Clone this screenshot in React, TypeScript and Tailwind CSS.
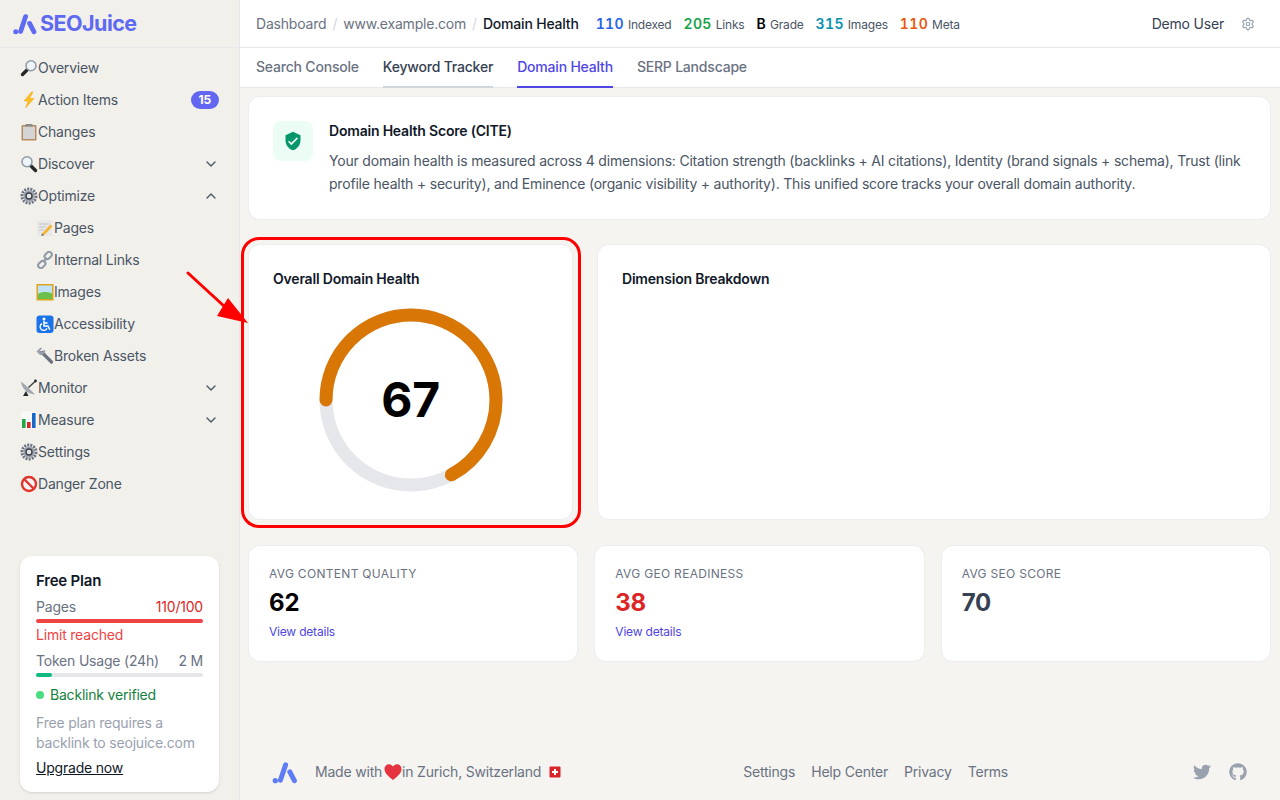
import React from 'react';
import { ChevronDown, ChevronUp, Settings } from 'lucide-react';
import { FaTwitter, FaGithub } from 'react-icons/fa';
import { MdVerifiedUser } from 'react-icons/md';

const font = { fontFamily: 'Inter, "Noto Sans", sans-serif' };

function LogoMark({ className }: { className?: string }) {
  return (
    <svg viewBox="0 0 24 22" className={className} fill="none" stroke="currentColor" strokeLinecap="round">
      <circle cx="2.7" cy="18.8" r="2.5" fill="currentColor" stroke="none" />
      <path d="M7.6 18.4 12.6 3.6" strokeWidth="4.8" />
      <path d="M16.6 10.4 21 18.8" strokeWidth="4.8" />
    </svg>
  );
}

/* small drawings standing in for the emoji of the sidebar */
function Glass({ flip }: { flip?: boolean }) {
  return (
    <svg viewBox="0 0 18 18" className={`h-[18px] w-[18px] ${flip ? '-scale-x-100' : ''}`}>
      <path d="M7.5 10.5 2.5 15.5" stroke="#27272a" strokeWidth="3.4" strokeLinecap="round" />
      <circle cx="11" cy="6.8" r="5" fill="#eef4f8" stroke="#8d99a6" strokeWidth="1.5" />
    </svg>
  );
}
function Zap() {
  return (
    <svg viewBox="0 0 18 18" className="h-[18px] w-[18px]">
      <path d="M11.5 1 4 10h4.2L5.5 17 14 7.5H9.6L13 1z" fill="#fbbf24" stroke="#f59e0b" strokeWidth=".5" />
    </svg>
  );
}
function Clipboard() {
  return (
    <svg viewBox="0 0 18 18" className="h-[18px] w-[18px]">
      <rect x="1.5" y="2" width="15" height="15.5" rx="1" fill="#b58b5f" />
      <rect x="3" y="3.5" width="12" height="12.5" fill="#d4d4d4" />
      <rect x="5.5" y="1" width="7" height="2.5" rx=".6" fill="#8a8a8a" />
    </svg>
  );
}
function Gear() {
  return (
    <svg viewBox="0 0 18 18" className="h-[18px] w-[18px]">
      <circle cx="9" cy="9" r="7" fill="none" stroke="#6b7280" strokeWidth="3" strokeDasharray="2 1.1" />
      <circle cx="9" cy="9" r="5.6" fill="#9ca3af" />
      <circle cx="9" cy="9" r="3" fill="#e5e7eb" stroke="#3f3f46" strokeWidth="1.4" />
    </svg>
  );
}
function Memo() {
  return (
    <svg viewBox="0 0 18 18" className="h-[18px] w-[18px]">
      <rect x="1" y="1.5" width="15" height="15.5" fill="#e8e8e8" />
      <path d="M3 5h10M3 8h7M3 11h5" stroke="#c4c4c4" strokeWidth="1" />
      <path d="M6 14.5 14.5 5.5l2 2L8 16.2z" fill="#f5b32e" />
      <path d="M6 14.5 5.3 16.8 8 16.2z" fill="#52525b" />
    </svg>
  );
}
function LinkIcon() {
  return (
    <svg viewBox="0 0 18 18" className="h-[18px] w-[18px]" fill="none" stroke="#8f9aa6" strokeWidth="2">
      <rect x="8.2" y="1.8" width="8" height="5.4" rx="2.7" transform="rotate(-45 12.2 4.5)" />
      <rect x="1.8" y="10.8" width="8" height="5.4" rx="2.7" transform="rotate(-45 5.8 13.5)" />
      <path d="M7 11 11 7" />
    </svg>
  );
}
function Picture() {
  return (
    <svg viewBox="0 0 18 18" className="h-[18px] w-[18px]">
      <rect x=".5" y="1" width="17" height="16.5" fill="#d9a520" />
      <rect x="2" y="2.5" width="14" height="13.5" fill="#bfe3f5" />
      <path d="M2 11c4-2.5 9-2.5 14-.5V16H2z" fill="#6cc04a" />
    </svg>
  );
}
function Wheelchair() {
  return (
    <svg viewBox="0 0 18 18" className="h-[18px] w-[18px]">
      <rect x=".5" y=".5" width="17" height="17.5" rx="3" fill="#1a73e8" />
      <circle cx="8" cy="4" r="1.5" fill="#fff" />
      <path d="M8 6v5h4l1.8 3.6M8 8h3.6" fill="none" stroke="#fff" strokeWidth="1.5" />
      <path d="M6 8.6a3.6 3.6 0 1 0 5 4.6" fill="none" stroke="#fff" strokeWidth="1.3" />
    </svg>
  );
}
function Wrench() {
  return (
    <svg viewBox="0 0 18 18" className="h-[18px] w-[18px]">
      <path d="M6 5.5 15.5 15" stroke="#6b7280" strokeWidth="3.2" strokeLinecap="round" />
      <path d="M1 4.5 4.5 1l1 .2L3.7 3.4l1 1.9 2-.3L8.5 3 8.6 5.5 6.8 7.6 4 7.4z" fill="#9ca3af" stroke="#8b929b" strokeWidth=".8" />
    </svg>
  );
}
function Satellite() {
  return (
    <svg viewBox="0 0 18 18" className="h-[18px] w-[18px]">
      <path d="M1 2.5C1.5 9 7 15 15 15.5 12 12 5 5.5 1 2.5z" fill="#a1a8b0" />
      <path d="M6 12 3 17h5.5" fill="#27272a" />
      <path d="M8.5 8.5 15 2.5" stroke="#3f3f46" strokeWidth="1.4" />
      <circle cx="15.5" cy="2" r="1.4" fill="#27272a" />
    </svg>
  );
}
function BarChart() {
  return (
    <svg viewBox="0 0 18 18" className="h-[18px] w-[18px]">
      <rect x=".5" y=".5" width="17" height="17" fill="#f8f8f8" />
      <rect x="2" y="8" width="3.6" height="9" fill="#22a745" />
      <rect x="7" y="11" width="3.6" height="6" fill="#d3272b" />
      <rect x="12" y="2" width="3.6" height="15" fill="#1a66c9" />
    </svg>
  );
}
function NoEntry() {
  return (
    <svg viewBox="0 0 18 18" className="h-[18px] w-[18px]">
      <circle cx="9" cy="9" r="7" fill="#f4f4f5" stroke="#e0362c" strokeWidth="2.4" />
      <path d="M4 4 14 14" stroke="#e0362c" strokeWidth="2.4" />
    </svg>
  );
}

function NavRow({ icon, label, sub, open, badge }: { icon: React.ReactNode; label: string; sub?: boolean; open?: boolean; badge?: string }) {
  return (
    <div className={`flex h-8 items-center pr-5 text-sm text-gray-600 ${sub ? 'pl-9' : 'pl-5'}`}>
      {icon}
      <span className="flex-1">{label}</span>
      {badge && (
        <span className="rounded-full bg-[#6366f1] px-2 text-xs leading-[18px] font-bold text-white">{badge}</span>
      )}
      {open === false && <ChevronDown size={16} className="text-gray-600" />}
      {open === true && <ChevronUp size={16} className="text-gray-600" />}
    </div>
  );
}

function Sidebar() {
  return (
    <aside className="flex h-full w-[240px] shrink-0 flex-col border-r border-gray-200 bg-[#f2f0eb]">
      <div className="flex h-[48px] shrink-0 items-center gap-[3px] border-b border-gray-200 pl-[13px] text-[#5f6af2]">
        <LogoMark className="h-[22px] w-6" />
        <span className="text-[21.5px] font-bold tracking-tight">SEOJuice</span>
      </div>
      <nav className="pt-1">
        <NavRow icon={<Glass />} label="Overview" />
        <NavRow icon={<Zap />} label="Action Items" badge="15" />
        <NavRow icon={<Clipboard />} label="Changes" />
        <NavRow icon={<Glass flip />} label="Discover" open={false} />
        <NavRow icon={<Gear />} label="Optimize" open />
        <NavRow sub icon={<Memo />} label="Pages" />
        <NavRow sub icon={<LinkIcon />} label="Internal Links" />
        <NavRow sub icon={<Picture />} label="Images" />
        <NavRow sub icon={<Wheelchair />} label="Accessibility" />
        <NavRow sub icon={<Wrench />} label="Broken Assets" />
        <NavRow icon={<Satellite />} label="Monitor" open={false} />
        <NavRow icon={<BarChart />} label="Measure" open={false} />
        <NavRow icon={<Gear />} label="Settings" />
        <NavRow icon={<NoEntry />} label="Danger Zone" />
      </nav>
      <div className="mx-5 mt-auto mb-2 rounded-xl bg-white px-4 pt-[15px] pb-[14px] text-sm shadow-sm">
        <div className="text-[15px] leading-5 font-semibold text-gray-900">Free Plan</div>
        <div className="mt-[6px] flex justify-between leading-5 text-gray-500">
          <span>Pages</span>
          <span className="text-[#dc2626]">110/100</span>
        </div>
        <div className="mt-[2px] h-1 rounded-full bg-[#ef4444]" />
        <div className="mt-[2px] leading-5 text-[#ef4444]">Limit reached</div>
        <div className="mt-[6px] flex justify-between leading-5 text-gray-500">
          <span>Token Usage (24h)</span>
          <span>2 M</span>
        </div>
        <div className="mt-[2px] h-1 rounded-full bg-gray-200">
          <div className="h-1 w-4 rounded-full bg-[#10b981]" />
        </div>
        <div className="mt-2 flex items-center gap-[6px] leading-5 text-[#15803d]">
          <span className="h-2 w-2 rounded-full bg-[#4ade80]" />
          Backlink verified
        </div>
        <div className="mt-2 leading-5 text-gray-400">
          Free plan requires a backlink to seojuice.com
        </div>
        <div className="mt-[5px] leading-5 text-gray-900 underline">Upgrade now</div>
      </div>
    </aside>
  );
}

function HeaderStat({ value, label, color }: { value: string; label: string; color: string }) {
  return (
    <span className="flex items-baseline gap-1">
      <span className={`text-sm font-semibold tracking-[0.35px] tabular-nums ${color}`}>{value}</span>
      <span className="text-xs text-gray-600">{label}</span>
    </span>
  );
}

function TopBar() {
  return (
    <header className="flex h-[48px] shrink-0 items-center border-b border-gray-200 bg-white pr-[25px] pl-4 text-sm">
      <span className="text-gray-500">Dashboard</span>
      <span className="mx-[6px] text-gray-300">/</span>
      <span className="text-gray-500">www.example.com</span>
      <span className="mx-[6px] text-gray-300">/</span>
      <span className="font-medium text-gray-900">Domain Health</span>
      <div className="ml-[17px] flex items-center gap-3">
        <HeaderStat value="110" label="Indexed" color="text-[#2563eb]" />
        <HeaderStat value="205" label="Links" color="text-[#16a34a]" />
        <HeaderStat value="B" label="Grade" color="text-black" />
        <HeaderStat value="315" label="Images" color="text-[#0891b2]" />
        <HeaderStat value="110" label="Meta" color="text-[#ea580c]" />
      </div>
      <span className="ml-auto text-gray-700">Demo User</span>
      <Settings size={14} className="ml-[17px] text-gray-400" />
    </header>
  );
}

function Tabs() {
  return (
    <div className="flex h-10 shrink-0 gap-6 border-b border-gray-200 bg-white px-4 text-sm font-medium">
      <span className="-mb-px flex items-center border-b-2 border-transparent pb-px text-gray-500">Search Console</span>
      <span className="-mb-px flex items-center border-b-2 border-gray-300 pb-px text-gray-700">Keyword Tracker</span>
      <span className="-mb-px flex items-center border-b-2 border-[#4f46e5] pb-px text-[#4f46e5]">Domain Health</span>
      <span className="-mb-px flex items-center border-b-2 border-transparent pb-px text-gray-500">SERP Landscape</span>
    </div>
  );
}

function Gauge() {
  const r = 85;
  const c = 2 * Math.PI * r;
  return (
    <div className="relative mx-auto h-[192px] w-[192px]">
      <svg viewBox="0 0 192 192" className="h-full w-full rotate-180">
        <circle cx="96" cy="96" r={r} fill="none" stroke="#e5e7eb" strokeWidth="13" />
        <circle cx="96" cy="96" r={r} fill="none" stroke="#d97706" strokeWidth="13" strokeLinecap="round" strokeDasharray={`${c * 0.67} ${c}`} />
      </svg>
      <div className="absolute inset-0 flex items-center justify-center text-5xl font-bold text-black">67</div>
    </div>
  );
}

function StatCard({ label, value, color, link }: { label: string; value: string; color: string; link?: boolean }) {
  return (
    <div className="rounded-xl border border-gray-200/70 bg-white p-5 pb-[21px]">
      <div className="text-xs leading-4 tracking-wide text-gray-500 uppercase">{label}</div>
      <div className={`mt-[5px] text-2xl leading-8 font-bold ${color}`}>{value}</div>
      {link && <div className="mt-[5px] text-xs leading-4 text-[#4f46e5]">View details</div>}
    </div>
  );
}

function Footer() {
  return (
    <footer className="mt-auto flex h-[56px] items-center pr-6 pl-6 text-sm text-gray-500">
      <LogoMark className="h-[23px] w-[26px] text-[#5f7cf7]" />
      <span className="ml-[17px]">Made with</span>
      <svg viewBox="0 0 18 18" className="ml-[2px] h-[18px] w-[18px]">
        <path d="M9 17C4 13 .5 10 .5 6 .5 3 2.8 1.2 5 1.2 6.8 1.2 8.2 2.2 9 3.6 9.8 2.2 11.2 1.2 13 1.2 15.2 1.2 17.5 3 17.5 6 17.5 10 14 13 9 17z" fill="#e5333f" />
      </svg>
      <span>in Zurich, Switzerland</span>
      <svg viewBox="0 0 12 12" className="ml-2 h-3 w-3">
        <rect x="0.5" y="0.5" width="11" height="11" rx="1" fill="#d8232a" />
        <path d="M6 3v6M3 6h6" stroke="#fff" strokeWidth="2" />
      </svg>
      <div className="ml-[182px] flex gap-4">
        <span>Settings</span>
        <span>Help Center</span>
        <span>Privacy</span>
        <span>Terms</span>
      </div>
      <div className="ml-auto flex items-center gap-[18px] text-gray-400">
        <FaTwitter size={18} />
        <FaGithub size={18} />
      </div>
    </footer>
  );
}

export default function App() {
  return (
    <div className="relative flex h-screen w-full overflow-hidden tracking-[-0.2px]" style={font}>
      <Sidebar />
      <div className="flex min-w-0 flex-1 flex-col bg-[#f5f4f1]">
        <TopBar />
        <Tabs />
        <main className="flex flex-1 flex-col pt-2 pr-[9px] pl-2">
          <div className="flex gap-4 rounded-xl border border-gray-200/70 bg-white p-6">
            <div className="flex h-10 w-10 shrink-0 items-center justify-center rounded-lg bg-[#ecfdf5]">
              <MdVerifiedUser size={20} className="text-[#059669]" />
            </div>
            <div>
              <h3 className="text-sm font-semibold text-gray-900">Domain Health Score (CITE)</h3>
              <p className="mt-2 text-sm leading-[23px] text-gray-600">
                Your domain health is measured across 4 dimensions: Citation strength (backlinks + AI citations), Identity (brand signals + schema), Trust (link profile health + security), and Eminence (organic visibility + authority). This unified score tracks your overall domain authority.
              </p>
            </div>
          </div>

          <div className="mt-6 grid grid-cols-[325px_1fr] gap-6">
            <div className="h-[276px] rounded-xl border border-gray-200/70 bg-white p-6">
              <h3 className="text-sm font-semibold text-gray-900">Overall Domain Health</h3>
              <div className="mt-[15px]">
                <Gauge />
              </div>
            </div>
            <div className="rounded-xl border border-gray-200/70 bg-white p-6">
              <h3 className="text-sm font-semibold text-gray-900">Dimension Breakdown</h3>
            </div>
          </div>

          <div className="mt-[25px] grid grid-cols-3 gap-4">
            <StatCard label="Avg Content Quality" value="62" color="text-black" link />
            <StatCard label="Avg GEO Readiness" value="38" color="text-[#dc2626]" link />
            <StatCard label="Avg SEO Score" value="70" color="text-gray-700" />
          </div>
          <Footer />
        </main>
      </div>

      {/* annotation drawn over the page */}
      <div className="pointer-events-none absolute top-[237px] left-[241px] h-[291px] w-[340px] rounded-[18px] border-[3px] border-[#f00]" />
      <svg className="pointer-events-none absolute top-[270px] left-[185px] h-[56px] w-[66px]" viewBox="0 0 66 56">
        <path d="M3 3 40 37" stroke="#f00" strokeWidth="3" strokeLinecap="round" />
        <path d="M63 53 32 46 43 28z" fill="#f00" />
      </svg>
    </div>
  );
}
